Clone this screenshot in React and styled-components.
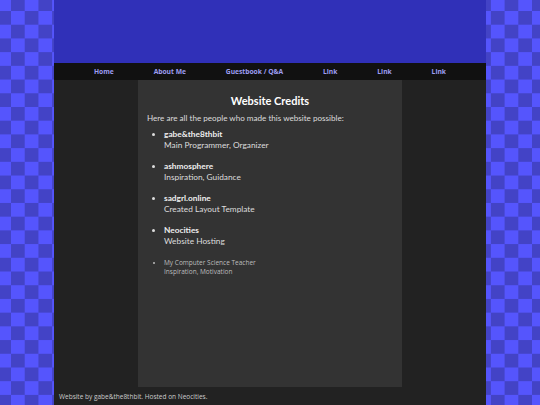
import React from "react";
import styled, { createGlobalStyle } from "styled-components";

const Global = createGlobalStyle`
  html, body {
    margin: 0;
    padding: 0;
  }
  body {
    background-color: #4343c6;
    background-image: conic-gradient(#4343c6 25%, #5555fd 0 50%, #4343c6 0 75%, #5555fd 0);
    background-size: 27.43px 27.43px;
    background-position: 11px 11px;
    font-family: "Open Sans", sans-serif;
    min-height: 405px;
  }
`;

const Page = styled.div`
  width: 432px;
  margin: 0 auto;
  height: 405px;
  display: flex;
  flex-direction: column;
  background: #222;
  overflow: hidden;
`;

const Header = styled.header`
  height: 63px;
  background: #3030b8;
  flex: none;
`;

const Nav = styled.nav`
  height: 17px;
  background: #111;
  display: flex;
  justify-content: space-evenly;
  align-items: center;
  flex: none;
`;

const NavLink = styled.a`
  font-family: "Open Sans", sans-serif;
  font-weight: 700;
  font-size: 6.7px;
  color: #9d9df2;
  text-decoration: none;
`;

const Main = styled.div`
  display: flex;
  height: 307px;
  flex: none;
`;

const Sidebar = styled.aside`
  width: 84px;
  flex: none;
  background: #222;
`;

const Content = styled.main`
  flex: 1;
  background: #333;
  padding: 12.5px 9px 0;
  color: #ddd;
  font-family: "Lato", sans-serif;
`;

const Title = styled.h1`
  margin: 0;
  text-align: center;
  font-size: 11px;
  line-height: 15px;
  font-weight: 700;
  color: #fff;
`;

const Intro = styled.p`
  margin: 4px 0 0;
  font-size: 8.1px;
  line-height: 12px;
`;

const List = styled.ul`
  margin: 5px 0 0;
  padding-left: 17px;
  list-style: disc;
`;

const Item = styled.li`
  font-size: 8.3px;
  line-height: 11.5px;
  margin-bottom: 9px;
  &::marker {
    font-size: 8px;
  }
`;

const SmallItem = styled.li`
  font-family: "Open Sans", sans-serif;
  font-size: 6.5px;
  line-height: 9px;
  color: #bdbdbd;
  padding-top: 1px;
`;

const Name = styled.div`
  font-weight: 700;
  color: #eee;
`;

const Footer = styled.footer`
  flex: 1;
  display: flex;
  align-items: center;
  padding-left: 5px;
  font-family: "Open Sans", sans-serif;
  font-size: 6.5px;
  color: #ccc;
`;

const credits = [
  ["gabe&the8thbit", "Main Programmer, Organizer"],
  ["ashmosphere", "Inspiration, Guidance"],
  ["sadgrl.online", "Created Layout Template"],
  ["Neocities", "Website Hosting"],
];

export default function App() {
  return (
    <>
      <Global />
      <Page>
        <Header />
        <Nav>
          <NavLink>Home</NavLink>
          <NavLink>About Me</NavLink>
          <NavLink>Guestbook / Q&amp;A</NavLink>
          <NavLink>Link</NavLink>
          <NavLink>Link</NavLink>
          <NavLink>Link</NavLink>
        </Nav>
        <Main>
          <Sidebar />
          <Content>
            <Title>Website Credits</Title>
            <Intro>Here are all the people who made this website possible:</Intro>
            <List>
              {credits.map(([n, d]) => (
                <Item key={n}>
                  <Name>{n}</Name>
                  <div>{d}</div>
                </Item>
              ))}
              <SmallItem>
                <div>My Computer Science Teacher</div>
                <div>Inspiration, Motivation</div>
              </SmallItem>
            </List>
          </Content>
          <Sidebar />
        </Main>
        <Footer>Website by gabe&amp;the8thbit. Hosted on Neocities.</Footer>
      </Page>
    </>
  );
}
